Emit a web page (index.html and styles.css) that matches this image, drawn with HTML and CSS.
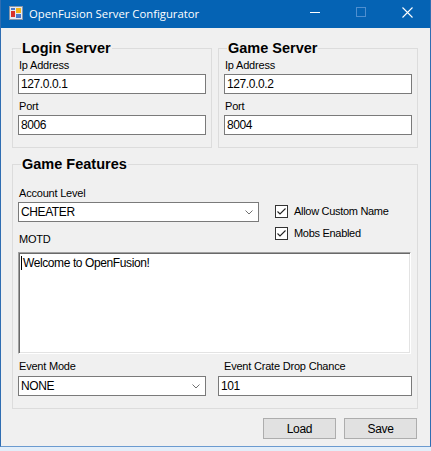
FILE: index.html
```html
<!DOCTYPE html>
<html>
<head>
<meta charset="utf-8">
<title>OpenFusion Server Configurator</title>
<link rel="stylesheet" href="styles.css">
</head>
<body>
<div class="window">
  <div class="titlebar">
    <svg class="app-icon" width="14" height="14" viewBox="0 0 14 14">
      <rect x="0.5" y="0.5" width="13" height="13" fill="#e4eaf2" stroke="#8796aa"/>
      <rect x="2" y="2" width="4" height="2" fill="#4a78c8"/>
      <rect x="2" y="5" width="4" height="6" fill="#d8322a"/>
      <rect x="7" y="2" width="5" height="5" fill="#f4b41a"/>
      <rect x="7" y="8" width="5" height="4" fill="#4a78c8"/>
    </svg>
    <span class="title">OpenFusion Server Configurator</span>
    <div class="controls">
      <span class="ctl"><svg width="10" height="10" viewBox="0 0 10 10"><path d="M0 5.5H10" stroke="#fff" stroke-width="1"/></svg></span>
      <span class="ctl"><svg width="10" height="10" viewBox="0 0 10 10"><rect x="0.5" y="0.5" width="9" height="9" fill="none" stroke="#4f8fd0" stroke-width="1"/></svg></span>
      <span class="ctl"><svg width="11" height="11" viewBox="0 0 11 11"><path d="M0.5 0.5L10.5 10.5M10.5 0.5L0.5 10.5" stroke="#fff" stroke-width="1.1"/></svg></span>
    </div>
  </div>
  <div class="client">
    <div class="top-row">
      <fieldset class="group server">
        <legend>Login Server</legend>
        <div class="lbl">Ip Address</div>
        <div class="field textbox">127.0.0.1</div>
        <div class="lbl gap-top">Port</div>
        <div class="field textbox">8006</div>
      </fieldset>
      <fieldset class="group server">
        <legend>Game Server</legend>
        <div class="lbl">Ip Address</div>
        <div class="field textbox">127.0.0.2</div>
        <div class="lbl gap-top">Port</div>
        <div class="field textbox">8004</div>
      </fieldset>
    </div>
    <fieldset class="group features">
      <legend>Game Features</legend>
      <div class="feature-top">
        <div class="level-col">
          <div class="lbl">Account Level</div>
          <div class="field combo">
            <span>CHEATER</span>
            <svg class="chev" width="8" height="5" viewBox="0 0 8 5"><path d="M0.5 0.5L4 4L7.5 0.5" fill="none" stroke="#707070" stroke-width="1"/></svg>
          </div>
          <div class="lbl motd-lbl">MOTD</div>
        </div>
        <div class="check-col">
          <div class="check-row">
            <span class="checkbox"><svg width="11" height="11" viewBox="0 0 11 11"><path d="M1.5 5.5L4 8L9.5 2.5" fill="none" stroke="#222" stroke-width="1.1"/></svg></span>
            <span class="check-text">Allow Custom Name</span>
          </div>
          <div class="check-row">
            <span class="checkbox"><svg width="11" height="11" viewBox="0 0 11 11"><path d="M1.5 5.5L4 8L9.5 2.5" fill="none" stroke="#222" stroke-width="1.1"/></svg></span>
            <span class="check-text">Mobs Enabled</span>
          </div>
        </div>
      </div>
      <div class="motd"><span class="caret"></span>Welcome to OpenFusion!</div>
      <div class="event-row">
        <div class="event-col">
          <div class="lbl">Event Mode</div>
          <div class="field combo">
            <span>NONE</span>
            <svg class="chev" width="8" height="5" viewBox="0 0 8 5"><path d="M0.5 0.5L4 4L7.5 0.5" fill="none" stroke="#707070" stroke-width="1"/></svg>
          </div>
        </div>
        <div class="event-col">
          <div class="lbl crate-lbl">Event Crate Drop Chance</div>
          <div class="field textbox">101</div>
        </div>
      </div>
    </fieldset>
    <div class="buttons">
      <button class="btn">Load</button>
      <button class="btn">Save</button>
    </div>
  </div>
</div>
</body>
</html>
```

FILE: styles.css
```css
* { box-sizing: border-box; }

html, body {
  margin: 0;
  padding: 0;
}

body {
  width: 431px;
  height: 451px;
  background: #e3eef9;
  font-family: "Liberation Sans", Arial, sans-serif;
  overflow: hidden;
}

.window {
  width: 431px;
  height: 447px;
  background: #f0f0f0;
  border-left: 1px solid #2f6db2;
  border-right: 1px solid #2f6db2;
  border-bottom: 1px solid #6b9bd0;
  display: flex;
  flex-direction: column;
}

.titlebar {
  height: 28px;
  flex: none;
  background: #0563b4;
  display: flex;
  align-items: center;
  padding-left: 8px;
}

.app-icon {
  display: block;
  flex: none;
  margin-top: -2px;
}

.title {
  margin-left: 6px;
  color: #fff;
  font-family: "Open Sans", "Noto Sans", sans-serif;
  font-size: 11.3px;
  line-height: 16px;
  margin-top: -1px;
  white-space: nowrap;
}

.controls {
  margin-left: auto;
  display: flex;
  height: 28px;
}

.ctl {
  width: 46px;
  height: 28px;
  display: flex;
  align-items: center;
  justify-content: center;
  padding-bottom: 4px;
}

.ctl svg { display: block; }

.client {
  padding: 12px 12px 7px 11px;
}

.top-row {
  display: flex;
  gap: 6px;
}

.group {
  margin: 0;
  border: 1px solid #dcdcdc;
  min-width: 0;
}

.group legend {
  font-family: "Liberation Sans", Arial, sans-serif;
  font-weight: bold;
  font-size: 14.5px;
  line-height: 16px;
  padding: 0 1px;
  margin-left: 3px;
  color: #000;
}

.server {
  width: 200px;
  padding: 3px 5px 12px 5px;
}

.lbl {
  font-size: 11px;
  line-height: 13px;
  color: #000;
  margin-left: 1px;
  letter-spacing: -0.2px;
  white-space: nowrap;
}

.gap-top { margin-top: 6px; }

.field {
  height: 20px;
  background: #fff;
  border: 1px solid #7a7a7a;
  font-size: 12px;
  line-height: 18px;
  padding: 0 2px;
  letter-spacing: -0.4px;
  color: #000;
  white-space: nowrap;
}

.textbox { margin-top: 2px; }

.combo {
  margin-top: 2px;
  display: flex;
  align-items: center;
  justify-content: space-between;
  padding-right: 5px;
}

.chev { display: block; flex: none; }

.features {
  margin-top: 8px;
  width: 406px;
  padding: 15px 5px 12px 5px;
}

.feature-top {
  display: flex;
  gap: 16px;
}

.level-col {
  width: 241px;
  flex: none;
}

.motd-lbl { margin-top: 11px; }

.check-col {
  padding-top: 16px;
  display: flex;
  flex-direction: column;
  gap: 6px;
}

.check-row {
  height: 16px;
  display: flex;
  align-items: center;
}

.checkbox {
  width: 13px;
  height: 13px;
  border: 1px solid #333;
  background: #fff;
  display: flex;
  align-items: center;
  justify-content: center;
  flex: none;
}

.checkbox svg { display: block; }

.check-text {
  margin-left: 6px;
  font-size: 11px;
  line-height: 13px;
  letter-spacing: -0.3px;
  white-space: nowrap;
}

.motd {
  margin-top: 6px;
  width: 393px;
  height: 102px;
  background: #fff;
  border-top: 1px solid #a0a0a0;
  border-left: 1px solid #a0a0a0;
  border-right: 1px solid #ffffff;
  border-bottom: 1px solid #ffffff;
  box-shadow: inset 1px 1px 0 #696969, inset -1px -1px 0 #e3e3e3;
  padding: 3px 2px 0 2px;
  font-size: 12px;
  line-height: 14px;
  letter-spacing: -0.4px;
  display: flex;
  align-items: flex-start;
}

.caret {
  display: block;
  width: 1px;
  height: 14px;
  background: #000;
  margin-right: 1px;
  flex: none;
}

.event-row {
  margin-top: 6px;
  display: grid;
  grid-template-columns: 188px 194px;
  column-gap: 12px;
}

.event-col .field { margin-top: 3px; }

.crate-lbl { margin-left: 6px; }

.buttons {
  margin-top: 9px;
  display: flex;
  justify-content: flex-end;
  gap: 8px;
  padding-right: 1px;
}

.btn {
  width: 73px;
  height: 21px;
  margin: 0;
  padding: 0;
  background: #e1e1e1;
  border: 1px solid #adadad;
  border-radius: 0;
  font-family: "Liberation Sans", Arial, sans-serif;
  font-size: 12px;
  letter-spacing: -0.3px;
  color: #000;
}
```
